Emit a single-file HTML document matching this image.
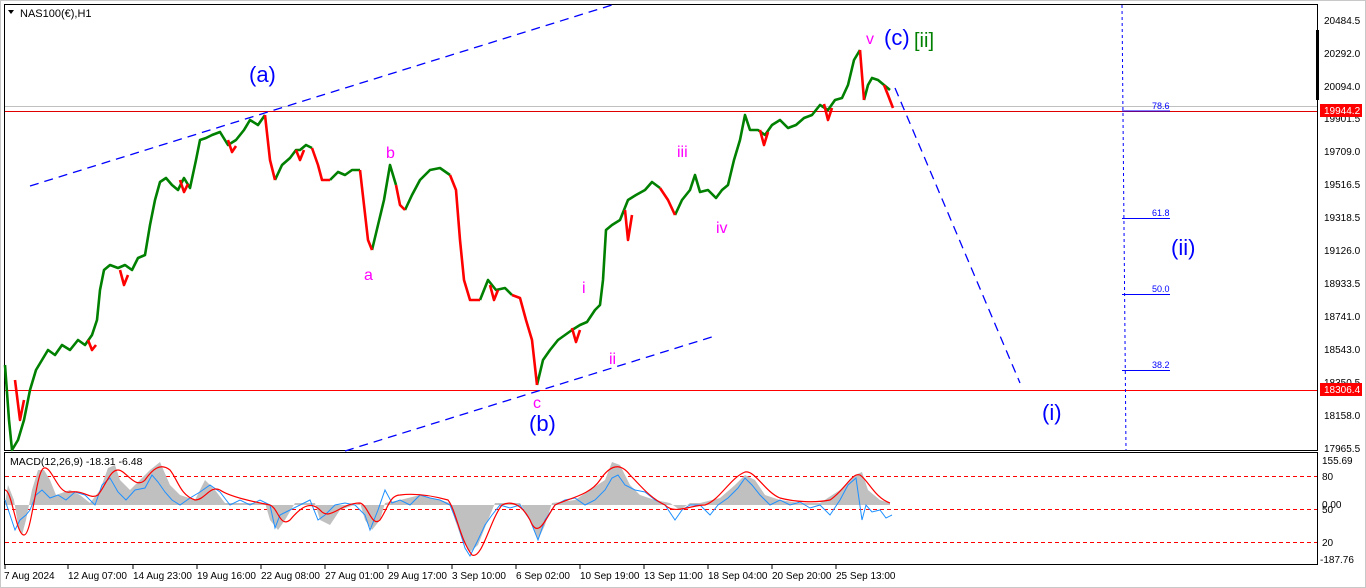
<!DOCTYPE html>
<html><head><meta charset="utf-8"><style>
html,body{margin:0;padding:0;background:#fff;}
svg{display:block;font-family:"Liberation Sans",sans-serif;}
</style></head><body>
<svg width="1366" height="588" viewBox="0 0 1366 588" xmlns="http://www.w3.org/2000/svg">
<rect x="0" y="0" width="1366" height="588" fill="#fff"/>
<rect x="0.5" y="0.5" width="1365" height="587" fill="none" stroke="#c8c8c8"/>
<rect x="4.5" y="4.5" width="1313" height="446" fill="#fff" stroke="#000"/>
<rect x="4.5" y="452.5" width="1313" height="112" fill="#fff" stroke="#000"/>
<text x="20" y="17" font-size="11" fill="#000">NAS100(€),H1</text>
<path d="M8 10 L14 10 L11 14 Z" fill="#000"/>

<line x1="5" y1="106.5" x2="1317" y2="106.5" stroke="#c0c0c0"/>
<line x1="5" y1="111.5" x2="1317" y2="111.5" stroke="#e00000"/>
<line x1="5" y1="390.5" x2="1317" y2="390.5" stroke="#f00"/>

<line x1="1122" y1="5" x2="1126" y2="450" stroke="#00f" stroke-dasharray="3,3"/>
<g stroke="#00f" stroke-width="1">
<line x1="1122" y1="111" x2="1170" y2="111"/>
<line x1="1122" y1="218.5" x2="1170" y2="218.5"/>
<line x1="1122" y1="294.5" x2="1170" y2="294.5"/>
<line x1="1122" y1="370.5" x2="1170" y2="370.5"/>
</g>
<g fill="#00f" font-size="9">
<text x="1152" y="109">78.6</text>
<text x="1152" y="216">61.8</text>
<text x="1152" y="292">50.0</text>
<text x="1152" y="368">38.2</text>
</g>

<g stroke="#00f" stroke-width="1.3" stroke-dasharray="9,6" fill="none">
<line x1="30" y1="186" x2="612" y2="5"/>
<line x1="345" y1="451" x2="715" y2="336"/>
<line x1="895" y1="88" x2="1020" y2="383"/>
</g>

<g fill="none" stroke-width="2.6" stroke-linejoin="round">
<polyline stroke="#008000" points="5,365 9,420 12,450 18,440 24,420 30,390 36,370 42,360 48,350 55,355 62,345 70,350 78,340 85,345 92,335 97,320 100,290 104,270 110,265 118,268 125,265 132,270 138,258 145,255 150,225 155,200 160,182 166,178 172,185 178,190 184,178 190,188 196,160 200,140 206,138 212,135 220,132 228,145 236,140 244,130 250,120 258,125 265,115"/>
<polyline stroke="#008000" points="275,180 282,165 290,158 296,150 300,150 306,145 312,148"/>
<polyline stroke="#008000" points="330,180 338,172 345,175 352,170 360,170"/>
<polyline stroke="#008000" points="372,250 378,225 384,200 390,165 396,185"/>
<polyline stroke="#008000" points="405,210 412,195 420,180 430,170 440,168 450,175"/>
<polyline stroke="#008000" points="480,300 488,280 496,290 505,288 512,295"/>
<polyline stroke="#008000" points="537,385 543,360 550,350 558,340 565,335 572,330 580,325 587,322 595,310 600,305 603,280 606,230 612,225 620,220 628,200 636,195 645,190 652,182 660,188"/>
<polyline stroke="#008000" points="675,215 682,200 690,190 695,175 700,192 708,190 716,198 722,190 728,185 734,160 740,140 745,115 750,130 758,130 765,135 772,125 780,120 788,128 796,125 804,118 812,115 820,105 828,110 835,100 842,98 848,85 854,60 860,50"/>
<polyline stroke="#008000" points="864,100 868,85 872,78 878,80 884,85 890,90"/>
<polyline stroke="#f00" points="265,115 270,160 275,180"/>
<polyline stroke="#f00" points="312,148 318,165 322,180 330,180"/>
<polyline stroke="#f00" points="360,170 364,205 368,240 372,250"/>
<polyline stroke="#f00" points="396,185 400,205 405,210"/>
<polyline stroke="#f00" points="450,175 456,190 460,240 464,280 470,300 480,300"/>
<polyline stroke="#f00" points="512,295 520,298 526,320 532,340 537,385"/>
<polyline stroke="#f00" points="660,188 668,200 675,215"/>
<polyline stroke="#f00" points="860,50 862,75 864,100"/>
<polyline stroke="#f00" points="884,85 888,95 893,108"/>
<polyline stroke="#f00" points="88,340 92,350 96,345"/>
<polyline stroke="#f00" points="120,270 124,285 128,275"/>
<polyline stroke="#f00" points="180,180 184,192 188,184"/>
<polyline stroke="#f00" points="228,140 232,152 236,146"/>
<polyline stroke="#f00" points="296,150 300,160 304,150"/>
<polyline stroke="#f00" points="490,285 494,300 498,290"/>
<polyline stroke="#f00" points="572,328 576,342 580,330"/>
<polyline stroke="#f00" points="625,210 628,240 632,215"/>
<polyline stroke="#f00" points="760,130 764,145 768,132"/>
<polyline stroke="#f00" points="824,104 828,120 832,108"/>
<polyline stroke="#f00" points="15,380 20,420 24,400"/>
</g>

<g font-size="22" fill="#00f">
<text x="249" y="82">(a)</text>
<text x="529" y="431">(b)</text>
<text x="884" y="45">(c)</text>
<text x="1171" y="255">(ii)</text>
<text x="1042" y="420">(i)</text>
</g>
<text x="914" y="47" font-size="20" fill="#008000">[ii]</text>
<g font-size="16" fill="#ff00ff">
<text x="386" y="158">b</text>
<text x="364" y="280">a</text>
<text x="533" y="408">c</text>
<text x="582" y="293">i</text>
<text x="609" y="364">ii</text>
<text x="677" y="157">iii</text>
<text x="716" y="233">iv</text>
<text x="866" y="44">v</text>
</g>

<rect x="1316" y="30" width="3" height="70" fill="#000"/>
<g font-size="10" fill="#000">
<text x="1324" y="24">20484.5</text>
<text x="1324" y="57">20292.0</text>
<text x="1324" y="90">20094.0</text>
<text x="1324" y="122">19901.5</text>
<text x="1324" y="155">19709.0</text>
<text x="1324" y="188">19516.5</text>
<text x="1324" y="221">19318.5</text>
<text x="1324" y="254">19126.0</text>
<text x="1324" y="287">18933.5</text>
<text x="1324" y="320">18741.0</text>
<text x="1324" y="353">18543.0</text>
<text x="1324" y="386">18350.5</text>
<text x="1324" y="419">18158.0</text>
<text x="1324" y="452">17965.5</text>
</g>
<rect x="1320" y="104" width="42" height="13" fill="#f00"/>
<text x="1324" y="114" font-size="10" fill="#fff">19944.2</text>
<rect x="1320" y="383" width="42" height="13" fill="#f00"/>
<text x="1324" y="393" font-size="10" fill="#fff">18306.4</text>

<text x="10" y="465" font-size="10.5" fill="#000">MACD(12,26,9) -18.31 -6.48</text>
<g stroke="#f00" stroke-dasharray="4,3">
<line x1="5" y1="476.5" x2="1317" y2="476.5"/>
<line x1="5" y1="509.5" x2="1317" y2="509.5"/>
<line x1="5" y1="542.5" x2="1317" y2="542.5"/>
</g>
<path fill="#c0c0c0" d="M5 503 L8 485 L14 500 L18 525 L22 535 L26 520 L32 490 L38 470 L44 470 L50 480 L56 495 L70 490 L80 495 L90 503 L100 490 L108 468 L115 465 L120 480 L130 490 L150 470 L160 462 L170 485 L180 495 L195 500 L205 480 L215 490 L225 503 L240 503 L265 503 L270 520 L278 530 L285 520 L295 503 L315 503 L320 520 L330 525 L340 510 L360 503 L365 520 L372 530 L380 520 L385 503 L400 500 L420 495 L440 500 L450 503 L455 520 L462 540 L470 552 L478 545 L486 525 L495 503 L520 503 L530 520 L538 540 L545 525 L552 503 L575 500 L590 490 L605 480 L612 462 L620 465 L630 485 L640 495 L655 500 L670 503 L680 510 L690 503 L700 503 L720 498 L735 485 L745 475 L755 480 L765 495 L780 500 L800 503 L820 503 L840 490 L855 475 L862 472 L868 490 L880 500 L890 503 L890 505 L5 505 Z"/>
<polyline fill="none" stroke="#1e90ff" stroke-width="1" points="5,500 10,515 15,530 20,520 26,515 30,510 36,495 42,490 50,498 58,495 66,500 75,492 85,495 95,505 102,485 110,478 118,492 126,500 135,490 145,488 152,475 158,482 165,492 172,500 180,505 190,498 200,492 210,485 220,492 230,505 240,500 250,505 260,500 270,505 275,528 280,515 290,510 300,505 310,500 318,520 325,515 335,505 345,503 355,505 365,515 370,530 378,510 385,490 392,503 400,500 410,505 420,495 430,498 440,500 450,505 458,525 465,548 470,556 478,540 485,525 492,515 500,505 510,508 520,505 530,520 538,540 545,520 555,505 565,500 575,498 585,505 595,500 605,490 612,478 618,475 625,485 635,490 645,492 655,500 665,505 675,520 682,510 690,505 700,505 710,515 718,505 728,498 738,488 745,478 752,485 760,495 770,505 780,500 790,505 800,502 810,508 820,505 830,515 840,500 848,485 856,478 862,520 866,505 872,512 880,510 886,518 892,515"/>
<path fill="none" stroke="#f00" stroke-width="1.2" d="M5 490 C12 490 16 535 24 535 C32 535 36 470 44 468 C52 466 58 495 70 492 C85 490 90 500 98 495 C106 485 110 470 118 470 C126 470 135 490 145 480 C152 470 160 462 170 470 C178 480 180 495 195 500 C205 500 210 485 220 490 C230 497 255 502 270 505 C278 508 280 528 290 520 C300 508 310 500 320 510 C330 522 340 503 360 503 C368 505 372 528 380 520 C388 508 390 495 400 495 C415 493 430 495 448 500 C456 510 460 540 472 555 C482 560 490 520 502 505 C512 500 522 505 530 520 C538 540 545 520 555 505 C570 498 590 495 600 480 C610 465 620 462 630 475 C640 485 650 498 665 505 C675 515 690 505 705 505 C720 500 730 478 745 472 C755 470 765 492 780 498 C795 502 815 503 830 500 C845 490 852 472 860 475 C868 480 875 498 890 503"/>
<g font-size="10" fill="#000">
<text x="1322" y="464">155.69</text>
<text x="1322" y="480">80</text>
<text x="1322" y="508">0.00</text>
<text x="1322" y="513">50</text>
<text x="1322" y="546">20</text>
<text x="1320" y="563">-187.76</text>
</g>

<g font-size="10" fill="#000">
<text x="4" y="579">7 Aug 2024</text>
<text x="68" y="579">12 Aug 07:00</text>
<text x="133" y="579">14 Aug 23:00</text>
<text x="197" y="579">19 Aug 16:00</text>
<text x="261" y="579">22 Aug 08:00</text>
<text x="325" y="579">27 Aug 01:00</text>
<text x="388" y="579">29 Aug 17:00</text>
<text x="452" y="579">3 Sep 10:00</text>
<text x="516" y="579">6 Sep 02:00</text>
<text x="580" y="579">10 Sep 19:00</text>
<text x="644" y="579">13 Sep 11:00</text>
<text x="708" y="579">18 Sep 04:00</text>
<text x="772" y="579">20 Sep 20:00</text>
<text x="836" y="579">25 Sep 13:00</text>
</g>
<g stroke="#000">
<line x1="5" y1="565" x2="5" y2="569"/><line x1="68" y1="565" x2="68" y2="569"/><line x1="133" y1="565" x2="133" y2="569"/><line x1="197" y1="565" x2="197" y2="569"/><line x1="261" y1="565" x2="261" y2="569"/><line x1="325" y1="565" x2="325" y2="569"/><line x1="388" y1="565" x2="388" y2="569"/><line x1="452" y1="565" x2="452" y2="569"/><line x1="516" y1="565" x2="516" y2="569"/><line x1="580" y1="565" x2="580" y2="569"/><line x1="644" y1="565" x2="644" y2="569"/><line x1="708" y1="565" x2="708" y2="569"/><line x1="772" y1="565" x2="772" y2="569"/><line x1="836" y1="565" x2="836" y2="569"/>
</g>
</svg>
</body></html>
